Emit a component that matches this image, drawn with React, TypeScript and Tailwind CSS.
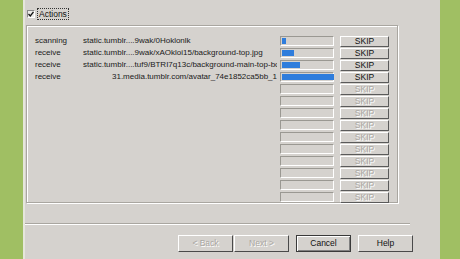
import React from 'react';

interface Row {
  status: string;
  url: string;
  progress: number;
  alignRight?: boolean;
}

const rows: Row[] = [
  { status: 'scanning', url: 'static.tumblr....9wak/0Hoklonlk', progress: 4 },
  { status: 'receive', url: 'static.tumblr....9wak/xAOkloi15/background-top.jpg', progress: 12 },
  { status: 'receive', url: 'static.tumblr....tuf9/BTRI7q13c/background-main-top-bottom.png', progress: 18 },
  { status: 'receive', url: '31.media.tumblr.com/avatar_74e1852ca5bb_1', progress: 52, alignRight: true },
];

const EMPTY_ROWS = 10;

function SkipButton({ disabled }: { disabled?: boolean }) {
  return (
    <div
      className={`w-[49px] h-[11px] flex items-center justify-center text-[8.5px] leading-none border border-t-white border-l-white border-b-[#5a5a5a] border-r-[#5a5a5a] ${
        disabled ? 'text-[#aaa7a2] [text-shadow:1px_1px_0_#fff]' : 'text-[#111]'
      }`}
    >
      SKIP
    </div>
  );
}

function ProgressBar({ value }: { value: number }) {
  return (
    <div className="w-[54px] h-[10px] border border-t-[#9a9892] border-l-[#9a9892] border-b-white border-r-white p-px">
      {value > 0 && <div className="h-full bg-[#2f7ddc]" style={{ width: value }} />}
    </div>
  );
}

function DialogButton({ label, disabled, isDefault }: { label: string; disabled?: boolean; isDefault?: boolean }) {
  return (
    <div
      className={`w-[55px] h-[17px] flex items-center justify-center text-[8.5px] border ${
        isDefault
          ? 'border-[#3a3a3a] shadow-[inset_1px_1px_#fff,inset_-1px_-1px_#808080]'
          : 'border-t-white border-l-white border-b-[#4a4a4a] border-r-[#4a4a4a]'
      } ${disabled ? 'text-[#aaa7a2] [text-shadow:1px_1px_0_#fff]' : 'text-[#111]'}`}
    >
      {label}
    </div>
  );
}

export default function App() {
  return (
    <div
      className="flex w-[460px] h-[259px] bg-[#a0bf63] overflow-hidden"
      style={{ fontFamily: '"Liberation Sans", Arial, sans-serif' }}
    >
      <div className="w-[23px] flex-shrink-0" />
      <div className="w-[2px] bg-[#e6e6dc] flex-shrink-0" />

      {/* Dialog */}
      <div className="w-[415px] flex-shrink-0 bg-[#d5d2ce] flex flex-col">
        {/* Checkbox header */}
        <div className="h-[25px] flex items-center pl-[2px] pt-[3px]">
          <div className="w-[8px] h-[8px] bg-[#ecebe8] border border-t-[#888] border-l-[#888] border-b-white border-r-white flex items-center justify-center">
            <svg width="6" height="6" viewBox="0 0 6 6">
              <path d="M0.5 3 L2.3 5 L5.5 0.8" stroke="#111" strokeWidth="1.3" fill="none" />
            </svg>
          </div>
          <div className="ml-[2px] px-[1px] border border-dotted border-[#333] text-[8.5px] leading-[10px] text-[#111]">
            Actions
          </div>
        </div>

        {/* Group box */}
        <div className="ml-px w-[373px] h-[179px] border border-t-[#a9a6a0] border-l-[#a9a6a0] border-b-white border-r-white shadow-[inset_-1px_-1px_#a9a6a0,inset_1px_1px_#fff] pt-[9px] pl-[8px]">
          {rows.map((r, i) => (
            <div key={i} className="h-[12px] flex items-center">
              <div className="w-[48px] text-[8px] leading-none text-[#1a1a1a] whitespace-nowrap">{r.status}</div>
              <div
                className={`w-[194px] text-[8px] leading-none text-[#1a1a1a] whitespace-nowrap overflow-hidden ${
                  r.alignRight ? 'text-right' : ''
                }`}
              >
                {r.url}
              </div>
              <div className="ml-[3px]">
                <ProgressBar value={r.progress} />
              </div>
              <div className="ml-[6px]">
                <SkipButton />
              </div>
            </div>
          ))}
          {Array.from({ length: EMPTY_ROWS }).map((_, i) => (
            <div key={`e${i}`} className="h-[12px] flex items-center">
              <div className="w-[242px]" />
              <div className="ml-[3px]">
                <ProgressBar value={0} />
              </div>
              <div className="ml-[6px]">
                <SkipButton disabled />
              </div>
            </div>
          ))}
        </div>

        {/* Separator */}
        <div className="mt-[19px] w-[385px] h-[2px] border-t border-t-[#a9a6a0] border-b border-b-white" />

        {/* Buttons */}
        <div className="mt-[10px] flex items-center pl-[153px]">
          <DialogButton label="< Back" disabled />
          <div className="ml-px">
            <DialogButton label="Next >" disabled />
          </div>
          <div className="ml-[7px]">
            <DialogButton label="Cancel" isDefault />
          </div>
          <div className="ml-[7px]">
            <DialogButton label="Help" />
          </div>
        </div>
      </div>

      <div className="flex-1" />
    </div>
  );
}
